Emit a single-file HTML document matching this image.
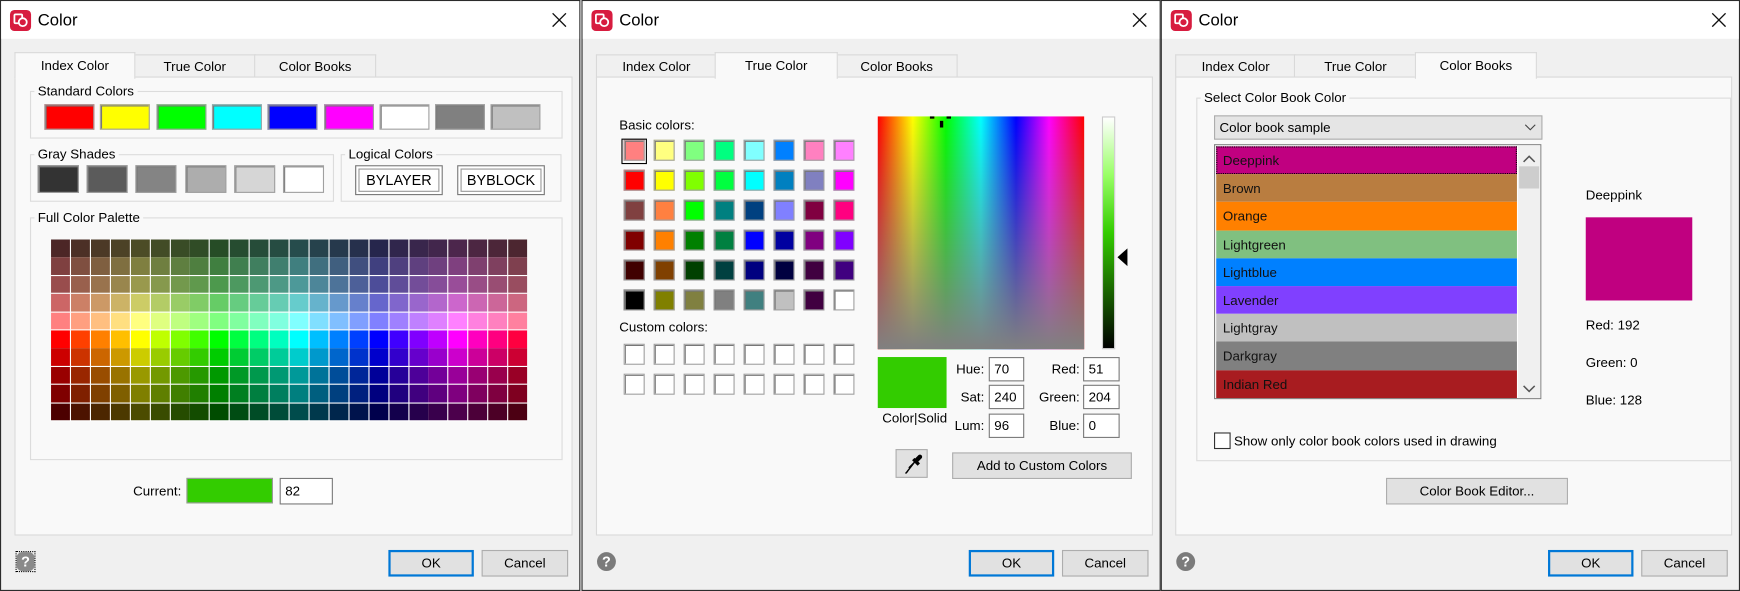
<!DOCTYPE html>
<html><head><meta charset="utf-8"><style>
html,body{margin:0;padding:0;width:1740px;height:591px;overflow:hidden;background:#f0f0f0}
#root{position:absolute;left:0;top:0;width:1568px;height:533px;transform:scale(1.10969,1.1088);transform-origin:0 0;font-family:"Liberation Sans",sans-serif;font-size:12px;color:#000}
.a{position:absolute;box-sizing:border-box}
.dlg{position:absolute;top:0;height:533px;background:#f0f0f0;border:1px solid #2b2b2b;box-sizing:border-box;overflow:hidden}
.tb{position:absolute;left:0;top:0;right:0;height:34px;background:#fff}
.tt{position:absolute;left:33px;top:9px;font-size:15px}
.tab{position:absolute;top:48px;height:21px;background:#f0f0f0;border:1px solid #d9d9d9;border-bottom:none;text-align:center;line-height:20px;font-size:12px}
.tab.s{top:46px;height:23px;background:#f9f9f9;z-index:2;line-height:22px}
.panel{position:absolute;top:68px;height:412px;background:#f9f9f9;border:1px solid #d9d9d9}
.grp{position:absolute;border:1px solid #dcdcdc}
.gl{position:absolute;background:#f9f9f9;padding:0 3px;top:-8px;left:3px;line-height:14px}
.btn{position:absolute;background:#e1e1e1;border:1px solid #adadad;text-align:center;box-sizing:border-box}
.btn.d{border:2px solid #0078d7}
.sw{position:absolute;box-sizing:border-box;border:1px solid #a0a0a0;box-shadow:inset 1px 1px 0 #777}
.inp{position:absolute;background:#fff;border:1px solid #7a7a7a;box-sizing:border-box;padding-left:4px;line-height:18px}
.help{position:absolute;width:17px;height:17px;border-radius:50%;background:#7b7b7b;color:#fff;font-weight:bold;font-size:13px;text-align:center;line-height:17px}
</style></head><body><div id="root"></div>
<script>
var R=document.getElementById('root');
function el(p,cls,st,html){var d=document.createElement('div');d.className=cls||'';if(st)d.style.cssText=st;if(html!=null)d.innerHTML=html;p.appendChild(d);return d}
function dialog(x,w,sel){
 var d=el(R,'dlg','left:'+x+'px;width:'+w+'px');
 var tb=el(d,'tb');
 el(tb,'a','left:8px;top:8px;width:19px;height:19px;border-radius:4px;background:#d71c3f','<svg width="19" height="19" viewBox="0 0 19 19"><rect x="4" y="4" width="7" height="8" rx="1" fill="none" stroke="#fff" stroke-width="1.6"/><circle cx="11.5" cy="11" r="3.6" fill="#d71c3f" stroke="#fff" stroke-width="1.6"/></svg>');
 el(tb,'tt','','Color');
 el(tb,'a','left:'+(w-28)+'px;top:9px;width:16px;height:16px','<svg width="16" height="16"><path d="M2 2L14 14M14 2L2 14" stroke="#111" stroke-width="1.2"/></svg>');
 var tabs=[['Index Color',107],['True Color',109],['Color Books',108]];var tx=12;
 for(var i=0;i<3;i++){el(d,'tab'+(i==sel?' s':''),'left:'+tx+'px;width:'+(tabs[i][1])+'px',tabs[i][0]);tx+=tabs[i][1];}
 var p=el(d,'panel','left:12px;width:'+(w-22)+'px');
 if(sel==0){el(d,'a','left:13px;top:496px;width:18px;height:19px;border:1px dotted #000','<div class="help" style="left:0;top:0;width:16px;height:17px;border-radius:5px;background:#8a8a8a">?</div>')}
 else el(d,'help','left:13px;top:497px','?');
 el(d,'btn d','left:'+(w-174)+'px;top:495px;width:77px;height:24px;line-height:20px','OK');
 el(d,'btn','left:'+(w-90)+'px;top:495px;width:78px;height:24px;line-height:22px','Cancel');
 return d;
}
function hsv(h,s,v){var c=v*s,x=c*(1-Math.abs((h/60)%2-1)),m=v-c,r,g,b;
 if(h<60){r=c;g=x;b=0}else if(h<120){r=x;g=c;b=0}else if(h<180){r=0;g=c;b=x}else if(h<240){r=0;g=x;b=c}else if(h<300){r=x;g=0;b=c}else{r=c;g=0;b=x}
 return 'rgb('+Math.round((r+m)*255)+','+Math.round((g+m)*255)+','+Math.round((b+m)*255)+')'}

/* Dialog 1 */
var d1=dialog(0,523,0);
var g=el(d1,'grp','left:26px;top:81px;width:478px;height:41px');el(g,'gl','','Standard Colors');
var sc=['#f00','#ff0','#0f0','#0ff','#00f','#f0f','#fff','#808080','#c0c0c0'];
for(var i=0;i<9;i++)el(d1,'sw','left:'+(39+i*50.3)+'px;top:93px;width:45px;height:23px;background:'+sc[i]);
g=el(d1,'grp','left:26px;top:138px;width:272px;height:41px');el(g,'gl','','Gray Shades');
var gs=['#333','#5b5b5b','#848484','#adadad','#d6d6d6','#fff'];
for(var i=0;i<6;i++)el(d1,'sw','left:'+(33+i*44.2)+'px;top:148px;width:37px;height:25px;background:'+gs[i]);
g=el(d1,'grp','left:306px;top:138px;width:197px;height:41px');el(g,'gl','','Logical Colors');
el(d1,'btn','left:319px;top:148px;width:79px;height:27px;background:#fff;border:1px solid #777;box-shadow:inset 0 0 0 2px #fff,inset 0 0 0 3px #999;line-height:25px;font-size:13px','BYLAYER');
el(d1,'btn','left:411px;top:148px;width:79px;height:27px;background:#fff;border:1px solid #777;box-shadow:inset 0 0 0 2px #fff,inset 0 0 0 3px #999;line-height:25px;font-size:13px','BYBLOCK');
g=el(d1,'grp','left:26px;top:195px;width:478px;height:217px');el(g,'gl','','Full Color Palette');
var rows=[[.5,76/255],[.5,127/255],[.5,.6],[.5,.8],[.5,1],[1,1],[1,.8],[1,.6],[1,127/255],[1,76/255]];
var pal=el(d1,'a','left:45px;top:215px;width:429px;height:164px;background:#fff');
for(var r=0;r<10;r++)for(var c=0;c<24;c++)el(pal,'a','left:'+(c*17.92)+'px;top:'+(r*16.4)+'px;width:17px;height:15.5px;background:'+hsv(c*15,rows[r][0],rows[r][1]));
el(d1,'a','left:119px;top:435px','Current:');
el(d1,'a','left:167px;top:430px;width:78px;height:23px;background:#33cc00;border:1px solid #999');
el(d1,'inp','left:251px;top:430px;width:48px;height:24px;line-height:22px','82');

/* Dialog 2 */
var d2=dialog(524,522,1);
el(d2,'a','left:33px;top:105px','Basic colors:');
var bc=[['#ff8080','#ffff80','#80ff80','#00ff80','#80ffff','#0080ff','#ff80c0','#ff80ff'],['#ff0000','#ffff00','#80ff00','#00ff40','#00ffff','#0080c0','#8080c0','#ff00ff'],['#804040','#ff8040','#00ff00','#008080','#004080','#8080ff','#800040','#ff0080'],['#800000','#ff8000','#008000','#008040','#0000ff','#0000a0','#800080','#8000ff'],['#400000','#804000','#004000','#004040','#000080','#000040','#400040','#400080'],['#000000','#808000','#808040','#808080','#408080','#c0c0c0','#400040','#ffffff']];
for(var r=0;r<6;r++)for(var c=0;c<8;c++)el(d2,'sw','left:'+(37+c*27)+'px;top:'+(140/1.109-1+r*27-0)+'px;width:19px;height:19px;background:'+bc[r][c]);
el(d2,'a','left:35px;top:124px;width:23px;height:23px;border:1px solid #000');
el(d2,'a','left:33px;top:287px','Custom colors:');
for(var r=0;r<2;r++)for(var c=0;c<8;c++)el(d2,'sw','left:'+(37+c*27)+'px;top:'+(309+r*26.5)+'px;width:19px;height:19px;background:#fff');
el(d2,'a','left:266px;top:104px;width:186px;height:210px;background:linear-gradient(to bottom,rgba(128,128,128,0),#808080),linear-gradient(to right,#f00,#ff0 17%,#0f0 33%,#0ff 50%,#00f 67%,#f0f 83%,#f00)');
el(d2,'a','left:322px;top:108px;width:3px;height:6px;background:#000');
el(d2,'a','left:313px;top:104px;width:4px;height:2px;background:#000');el(d2,'a','left:328px;top:104px;width:4px;height:2px;background:#000');
el(d2,'a','left:468px;top:104px;width:12px;height:210px;border:1px solid #ccc;background:linear-gradient(to bottom,#fff,#99ff66 25%,#33cc00 50%,#1a6600 75%,#000)');
el(d2,'a','left:482px;top:223px;width:0;height:0;border-top:8px solid transparent;border-bottom:8px solid transparent;border-right:9px solid #000');
el(d2,'a','left:266px;top:321px;width:62px;height:46px;background:#33cc00');
el(d2,'a','left:270px;top:369px;font-size:12px','Color|Solid');
var lab=[['Hue:','70','Red:','51'],['Sat:','240','Green:','204'],['Lum:','96','Blue:','0']];var ys=[321,346,372];
for(var i=0;i<3;i++){el(d2,'a','left:320px;width:42px;text-align:right;top:'+(ys[i]+4)+'px',lab[i][0]);el(d2,'inp','left:366px;top:'+ys[i]+'px;width:32px;height:22px;line-height:20px',lab[i][1]);
el(d2,'a','left:396px;width:52px;text-align:right;top:'+(ys[i]+4)+'px',lab[i][2]);el(d2,'inp','left:451px;top:'+ys[i]+'px;width:33px;height:22px;line-height:20px',lab[i][3]);}
el(d2,'btn','left:282px;top:404px;width:29px;height:26px','<svg width="26" height="24" viewBox="0 0 26 24"><path d="M9 19L7 21M8 20L15 11M10 16L17 9" stroke="#000" stroke-width="1.3" fill="none"/><path d="M14 8L19 13" stroke="#000" stroke-width="3"/><path d="M17 9L20 6" stroke="#000" stroke-width="4" stroke-linecap="round"/></svg>');
el(d2,'btn','left:333px;top:407px;width:162px;height:24px;line-height:22px','Add to Custom Colors');

/* Dialog 3 */
var d3=dialog(1046,522,2);
g=el(d3,'grp','left:31px;top:87px;width:480px;height:326px;border-color:#dcdcdc');el(g,'gl','','Select Color Book Color');
el(d3,'a','left:47px;top:103px;width:296px;height:22px;background:#e5e5e5;border:1px solid #adadad;padding-left:4px;line-height:20px','Color book sample<svg style="position:absolute;right:5px;top:7px" width="10" height="6"><path d="M0.5 0.5L5 5L9.5 0.5" stroke="#444" fill="none"/></svg>');
var lst=el(d3,'a','left:47px;top:129px;width:295px;height:230px;background:#fff;border:1px solid #828282');
var it=[['Deeppink','#c00080'],['Brown','#b97d40'],['Orange','#ff8000'],['Lightgreen','#80c080'],['Lightblue','#0080ff'],['Lavender','#8040ff'],['Lightgray','#c0c0c0'],['Darkgray','#808080'],['Indian Red','#a81c20']];
for(var i=0;i<9;i++)el(lst,'a','left:1px;top:'+(1+i*25.2)+'px;width:271px;height:25.3px;background:'+it[i][1]+';padding-left:6px;line-height:26px;font-size:12px;color:#111'+(i==0?';border:1px dotted #000;line-height:24px;padding-left:5px':''),it[i][0]);
el(lst,'a','left:273px;top:0;width:20px;height:228px;background:#f0f0f0');
el(lst,'a','left:274px;top:19px;width:18px;height:20px;background:#cdcdcd');
el(lst,'a','left:277px;top:5px','<svg width="12" height="8"><path d="M1 7L6 2L11 7" stroke="#555" stroke-width="1.4" fill="none"/></svg>');
el(lst,'a','left:277px;top:213px','<svg width="12" height="8"><path d="M1 1L6 6L11 1" stroke="#555" stroke-width="1.4" fill="none"/></svg>');
el(d3,'a','left:382px;top:168px;font-size:12px','Deeppink');
el(d3,'a','left:382px;top:195px;width:96px;height:75px;background:#c00080');
el(d3,'a','left:382px;top:285px','Red: 192');
el(d3,'a','left:382px;top:319px','Green: 0');
el(d3,'a','left:382px;top:353px','Blue: 128');
el(d3,'a','left:47px;top:389px;width:15px;height:15px;background:#fff;border:1px solid #333');
el(d3,'a','left:65px;top:390px','Show only color book colors used in drawing');
el(d3,'btn','left:202px;top:430px;width:164px;height:24px;line-height:22px','Color Book Editor...');
</script></body></html>
